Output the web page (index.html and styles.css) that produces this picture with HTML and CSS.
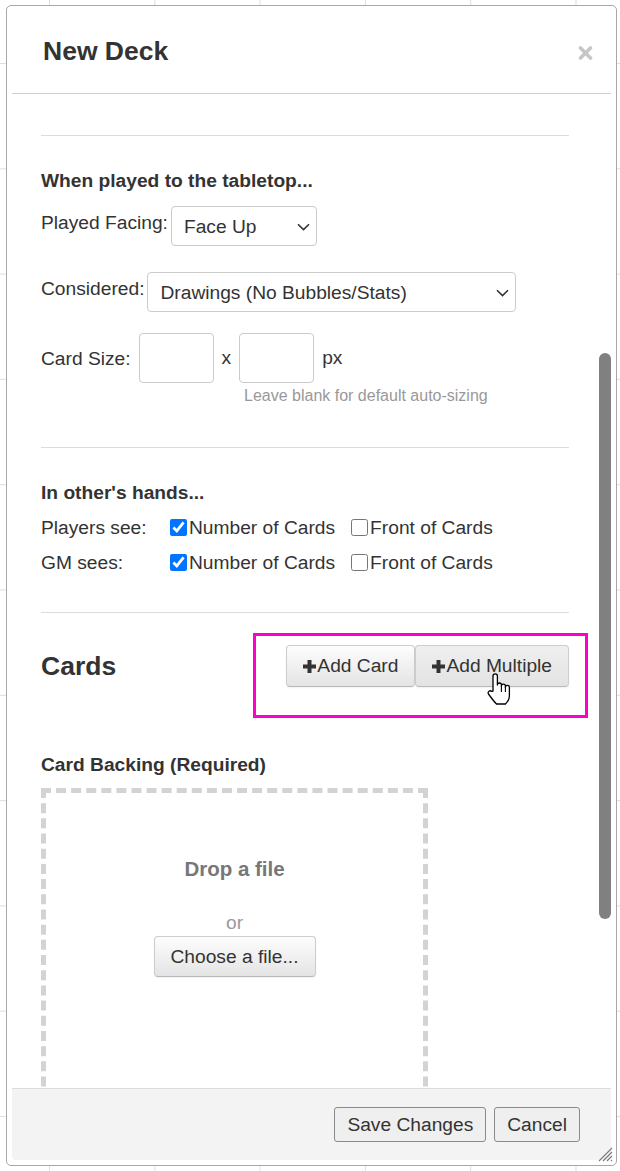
FILE: index.html
```html
<!DOCTYPE html>
<html lang="en">
<head>
<meta charset="utf-8">
<title>New Deck</title>
<link rel="stylesheet" href="styles.css">
</head>
<body>
<div class="dialog">
  <div class="titlebar">
    <h2 class="title">New Deck</h2>
    <svg class="close" width="15" height="14" viewBox="0 0 15 14" aria-label="close"><path d="M2.5 2 L12.5 12 M12.5 2 L2.5 12" stroke="#c6c6c6" stroke-width="3.6" stroke-linecap="round"/></svg>
  </div>
  <div class="content">
    <div class="main">
      <hr class="sep first">
      <h4 class="heading">When played to the tabletop...</h4>
      <div class="field f1">
        <span class="label">Played Facing:</span>
        <div class="select s1"><span>Face Up</span><svg class="chev" width="13" height="8" viewBox="0 0 13 8"><path d="M1 1.2 L6.5 6.6 L12 1.2" fill="none" stroke="#333" stroke-width="1.6"/></svg></div>
      </div>
      <div class="field f2">
        <span class="label">Considered:</span>
        <div class="select s2"><span>Drawings (No Bubbles/Stats)</span><svg class="chev" width="13" height="8" viewBox="0 0 13 8"><path d="M1 1.2 L6.5 6.6 L12 1.2" fill="none" stroke="#333" stroke-width="1.6"/></svg></div>
      </div>
      <div class="field f3">
        <span class="label">Card Size:</span>
        <div class="textbox"></div>
        <span>x</span>
        <div class="textbox"></div>
        <span>px</span>
      </div>
      <div class="hint">Leave blank for default auto-sizing</div>
      <hr class="sep second">
      <h4 class="heading">In other's hands...</h4>
      <div class="checks">
        <div class="checkrow">
          <span class="clabel">Players see:</span>
          <label class="opt"><input type="checkbox" checked><span>Number of Cards</span></label>
          <label class="opt"><input type="checkbox"><span>Front of Cards</span></label>
        </div>
        <div class="checkrow">
          <span class="clabel">GM sees:</span>
          <label class="opt"><input type="checkbox" checked><span>Number of Cards</span></label>
          <label class="opt"><input type="checkbox"><span>Front of Cards</span></label>
        </div>
      </div>
      <hr class="sep third">
      <div class="cardsrow">
        <h3 class="cards-title">Cards</h3>
        <div class="btngroup">
          <button class="btn"><svg class="plus" width="13" height="13" viewBox="0 0 13 13"><rect x="4.5" y="0" width="4" height="13" fill="#333"/><rect x="0" y="4.5" width="13" height="4" fill="#333"/></svg>Add Card</button>
          <button class="btn hover"><svg class="plus" width="13" height="13" viewBox="0 0 13 13"><rect x="4.5" y="0" width="4" height="13" fill="#333"/><rect x="0" y="4.5" width="13" height="4" fill="#333"/></svg>Add Multiple</button>
          <div class="highlight"></div>
        </div>
      </div>
      <h4 class="heading backing">Card Backing (Required)</h4>
      <div class="dropzone">
        <div class="drop-text">Drop a file</div>
        <div class="or">or</div>
        <button class="btn choose">Choose a file...</button>
      </div>
    </div>
    <div class="track"><div class="thumb"></div></div>
  </div>
  <div class="footer">
    <button class="fbtn">Save Changes</button>
    <button class="fbtn">Cancel</button>
  </div>
  <svg class="grip" width="17" height="17" viewBox="0 0 17 17"><path d="M16 3 L3 16 M16 7 L7 16 M16 11 L11 16 M16 15 L15 16" stroke="#7a7a7a" stroke-width="1.1"/></svg>
</div>
<svg class="cursor" width="26" height="34" viewBox="0 0 26 34"><path d="M7 19 V4 a2.2 2.2 0 0 1 4.4 0 V13 a2 2 0 0 1 4 0 V14.2 a2 2 0 0 1 4 0 V15.4 a2 2 0 0 1 4 0 V24 c0 3.5 -2 6 -4 8 H10.5 c-2.5 -2.5 -5.5 -6.5 -8 -10 a2 2 0 0 1 3 -2.6 Z" fill="#fff" stroke="#000" stroke-width="1.3" stroke-linejoin="round"/><path d="M15.4 14 V20 M19.4 15.2 V20" stroke="#000" stroke-width="1.1"/></svg>
</body>
</html>
```
FILE: styles.css
```css
html, body {
  margin: 0;
  padding: 0;
}
body {
  position: relative;
  width: 620px;
  height: 1171px;
  overflow: hidden;
  background-color: #fff;
  background-image:
    linear-gradient(to right, #dedede 1px, transparent 1px),
    linear-gradient(to bottom, #dedede 1px, transparent 1px);
  background-size: 105.3px 105.3px;
  background-position: 49px 63px;
  font-family: "Liberation Sans", Arial, sans-serif;
  font-size: 19.2px;
  color: #333;
}
.dialog {
  position: relative;
  box-sizing: border-box;
  width: 611px;
  height: 1161px;
  margin: 5px 0 0 6px;
  border: 1px solid #a8a8a8;
  border-radius: 5px;
  background: #fff;
  padding: 0 5px 5px 5px;
  display: flex;
  flex-direction: column;
}
.titlebar {
  height: 88px;
  flex: none;
  box-sizing: border-box;
  padding: 3px 18px 0 31px;
  border-bottom: 1px solid #cfcfcf;
  display: flex;
  align-items: center;
  justify-content: space-between;
}
.title {
  margin: 0;
  font-size: 26.5px;
  line-height: 30px;
  font-weight: bold;
  color: #333;
}
.close {
  display: block;
  margin-top: 3px;
}
.content {
  flex: none;
  height: 994px;
  display: flex;
  overflow: hidden;
}
.main {
  flex: 1;
  padding: 0 27px 0 29px;
  overflow: hidden;
}
.track {
  width: 15px;
  flex: none;
}
.thumb {
  width: 12px;
  height: 566px;
  margin: 259px 0 0 3px;
  background: #808080;
  border-radius: 6px;
}
.sep {
  height: 1px;
  border: 0;
  margin: 0;
  background: #dcdcdc;
}
.sep.first { margin-top: 41px; }
.sep.second { margin-top: 42px; }
.sep.third { margin-top: 32px; }
.heading {
  margin: 34px 0 0;
  font-size: 19.2px;
  line-height: 22px;
  font-weight: bold;
  color: #333;
}
.field {
  display: flex;
  align-items: flex-start;
}
.f1 { margin-top: 14px; }
.f2 { margin-top: 26px; }
.f3 {
  margin-top: 21px;
  align-items: center;
  gap: 8px;
}
.label {
  line-height: 22px;
  margin-top: 6px;
  margin-right: 3px;
}
.f3 .label {
  margin: 1px 0 0;
}
.select {
  box-sizing: border-box;
  height: 40px;
  border: 1px solid #cbcbcb;
  border-radius: 4px;
  display: flex;
  align-items: center;
  justify-content: space-between;
  padding: 2px 6px 0 12px;
  background: #fff;
}
.s1 { width: 146px; }
.s2 { width: 369px; }
.chev { display: block; }
.textbox {
  box-sizing: border-box;
  width: 75px;
  height: 50px;
  border: 1px solid #cbcbcb;
  border-radius: 4px;
  background: #fff;
}
.hint {
  margin-top: 4px;
  margin-left: 203px;
  font-size: 16px;
  line-height: 18px;
  color: #999;
}
.checks {
  margin-top: 6px;
}
.checkrow {
  height: 35px;
  display: flex;
  align-items: center;
}
.clabel {
  width: 129px;
  flex: none;
}
.opt {
  display: flex;
  align-items: center;
}
.opt + .opt {
  margin-left: 16px;
}
.opt input {
  width: 17px;
  height: 17px;
  margin: 0 2px 0 0;
  accent-color: #0075ff;
}
.cardsrow {
  margin-top: 32px;
  display: flex;
  align-items: center;
  justify-content: space-between;
}
.cards-title {
  margin: 0;
  font-size: 26.5px;
  line-height: 30px;
  font-weight: bold;
  color: #333;
}
.btngroup {
  position: relative;
  display: flex;
}
.btn {
  box-sizing: border-box;
  height: 42px;
  padding: 0 16px;
  font-family: "Liberation Sans", Arial, sans-serif;
  font-size: 19.2px;
  color: #333;
  border: 1px solid #cdcdcd;
  border-bottom-color: #b9b9b9;
  border-radius: 4px;
  background: linear-gradient(to bottom, #fdfdfd, #e4e4e4);
  box-shadow: 0 1px 2px rgba(0,0,0,0.06);
  display: flex;
  align-items: center;
  cursor: pointer;
}
.btn.hover {
  background: linear-gradient(to bottom, #efefef, #e3e3e3);
}
.plus {
  display: block;
  margin-right: 1px;
}
.highlight {
  position: absolute;
  left: -33px;
  right: -19px;
  top: -12px;
  bottom: -31px;
  border: 3px solid #ff00cc;
  pointer-events: none;
}
.heading.backing {
  margin-top: 67px;
}
.dropzone {
  box-sizing: border-box;
  width: 387px;
  height: 420px;
  margin-top: 12px;
  padding-top: 64px;
  border: 5px dashed #d3d3d3;
  display: flex;
  flex-direction: column;
  align-items: center;
}
.drop-text {
  font-size: 20.5px;
  line-height: 24px;
  font-weight: bold;
  color: #777;
}
.or {
  margin-top: 31px;
  line-height: 22px;
  color: #999;
}
.btn.choose {
  margin-top: 2px;
  width: 162px;
  height: 41px;
  justify-content: center;
  padding: 0;
}
.footer {
  flex: 1;
  box-sizing: border-box;
  border-top: 1px solid #dcdcdc;
  background: #f3f3f3;
  border-radius: 0 0 4px 4px;
  padding: 18px 31px 0 0;
  display: flex;
  justify-content: flex-end;
  align-items: flex-start;
  gap: 8px;
}
.fbtn {
  box-sizing: border-box;
  height: 35px;
  padding: 0 12px;
  font-family: "Liberation Sans", Arial, sans-serif;
  font-size: 19.2px;
  color: #333;
  background: #efefef;
  border: 1px solid #8a8a8a;
  border-radius: 3px;
}
.grip {
  position: absolute;
  right: 3px;
  bottom: 3px;
}
.cursor {
  position: absolute;
  left: 486px;
  top: 672px;
}
```
